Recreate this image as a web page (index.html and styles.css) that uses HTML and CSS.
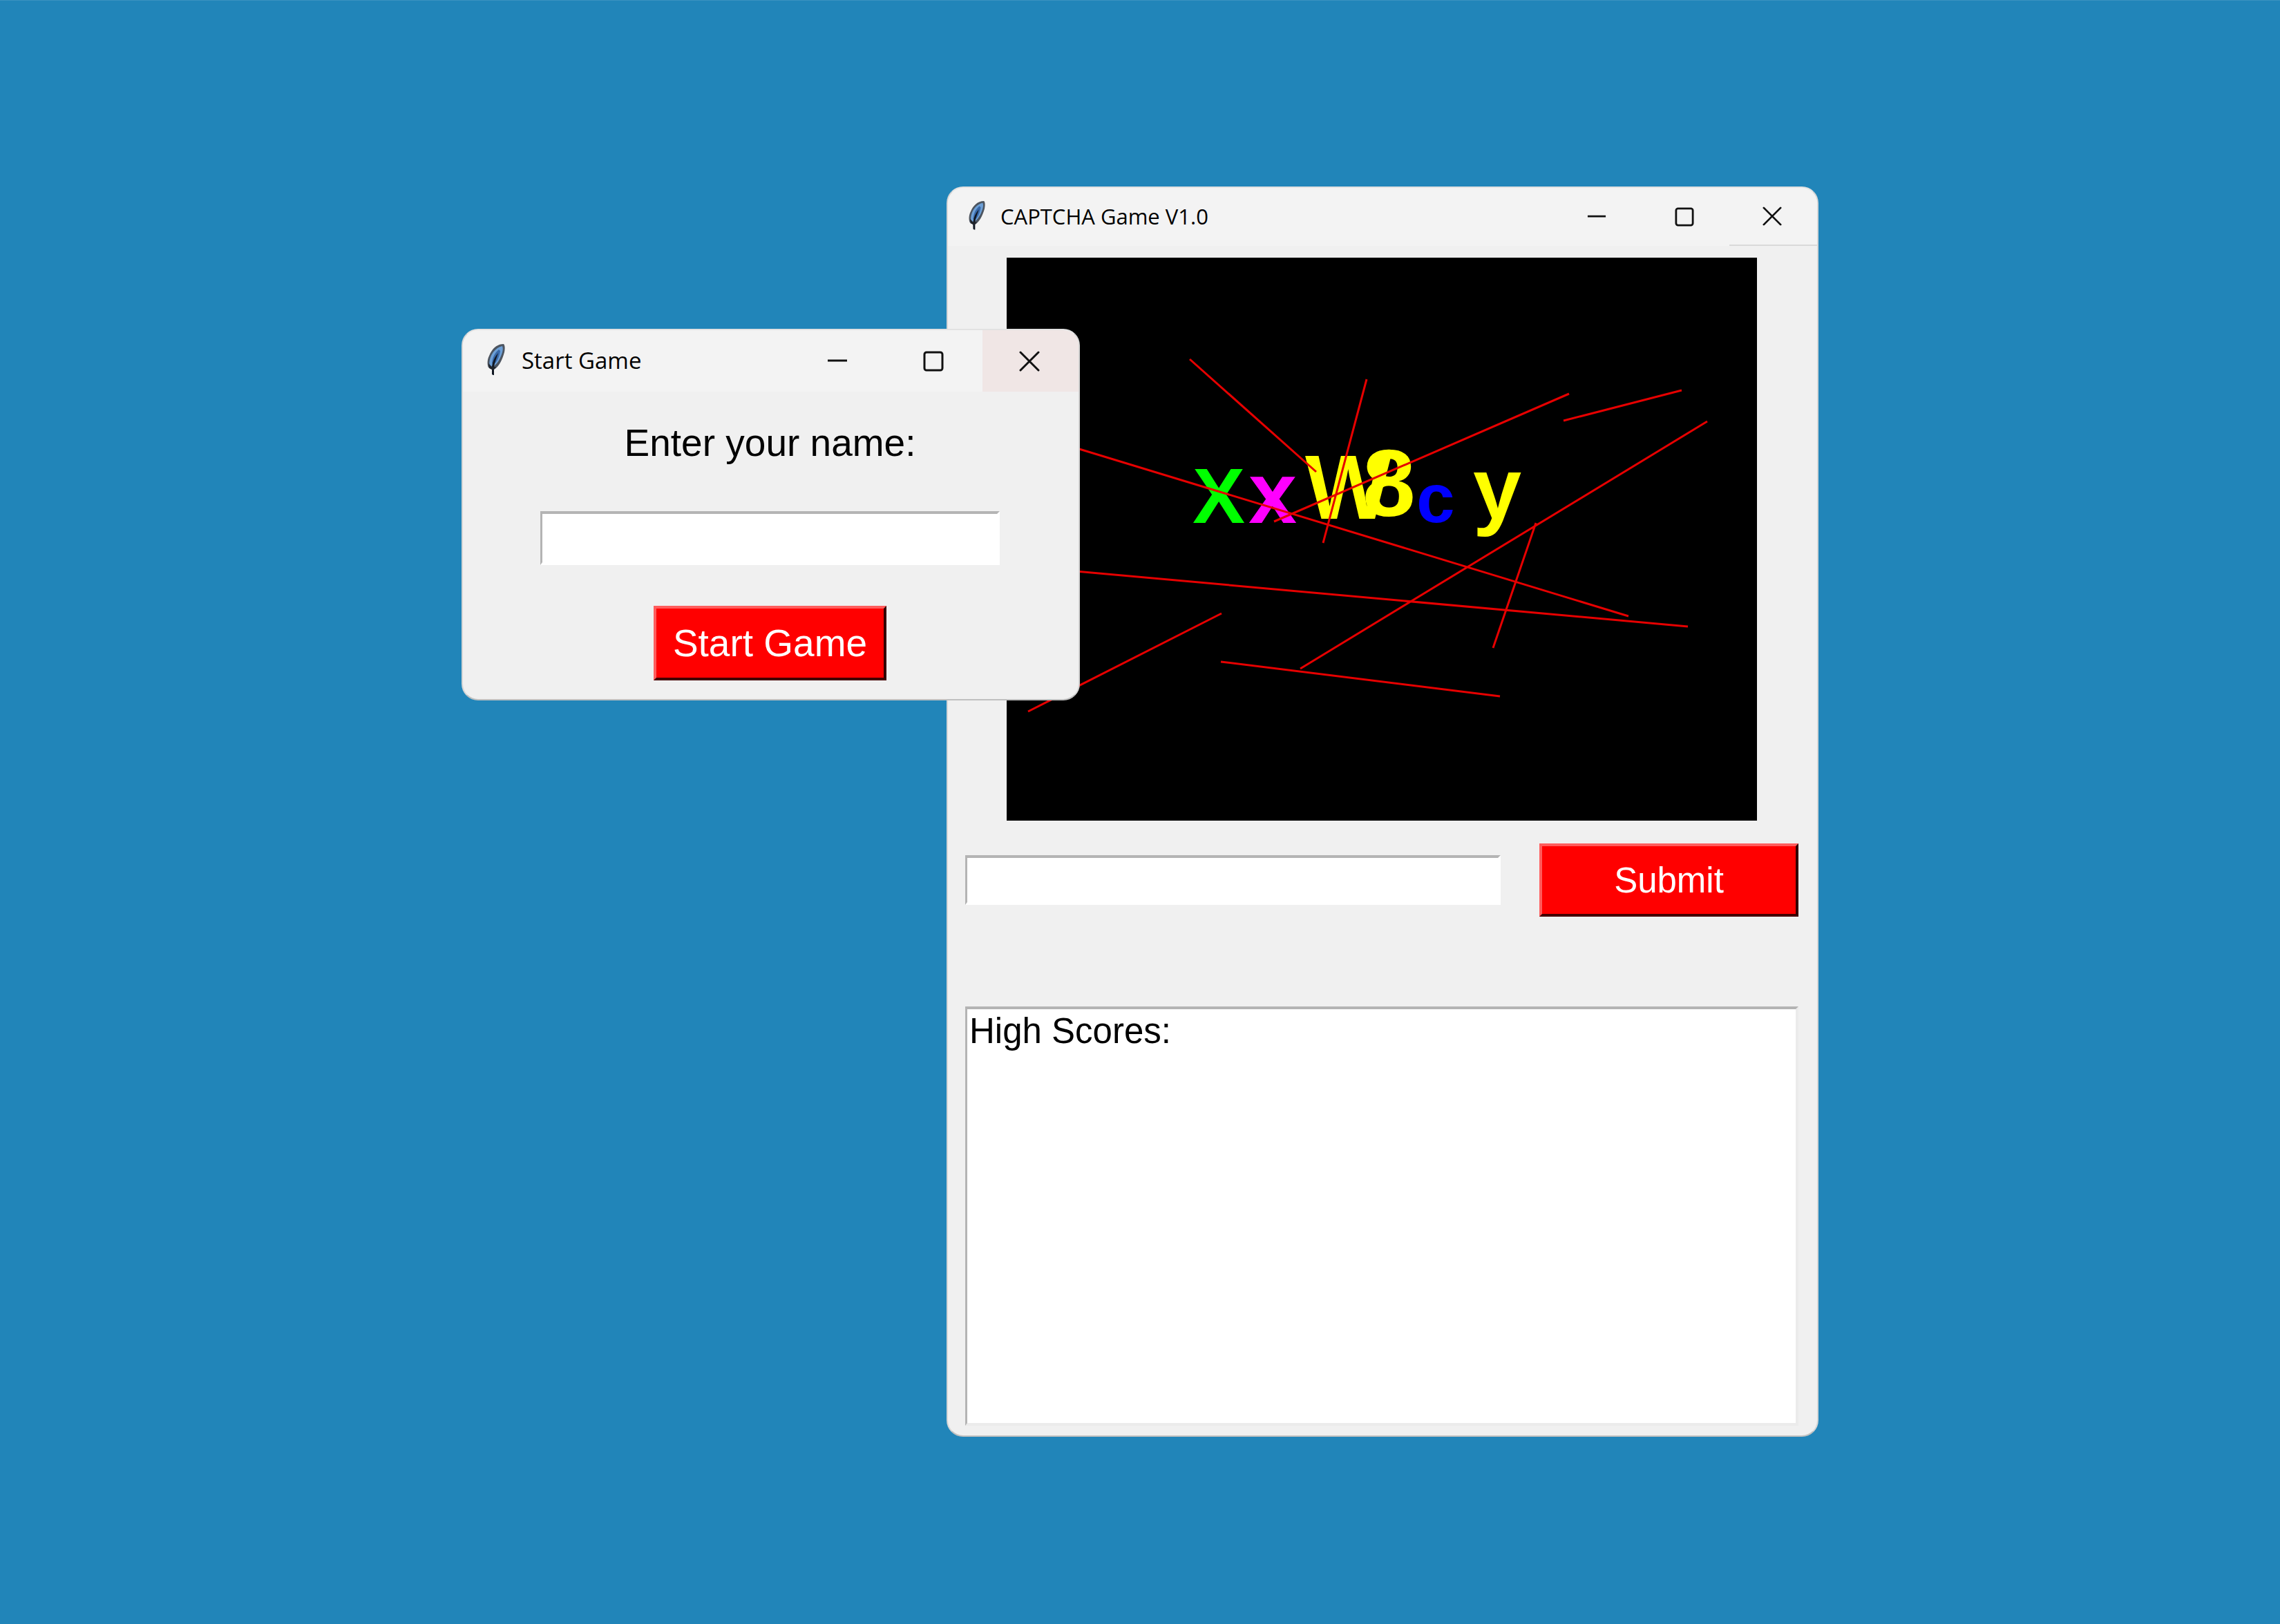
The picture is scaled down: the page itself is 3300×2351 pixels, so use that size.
FILE: index.html
```html
<!DOCTYPE html>
<html lang="en">
<head>
<meta charset="utf-8">
<title>CAPTCHA Game V1.0</title>
<link rel="stylesheet" href="styles.css">
</head>
<body>
<svg class="defs" aria-hidden="true">
  <symbol id="feather" viewBox="0 0 26 52">
    <path d="M24 1 C14 1 7 8 3 18 C0 24 0 31 2 35 L7 38 L8 46 L10 46 L10 38 C17 34 22 24 25 13 C26 8 26 3 24 1Z" fill="#4d5560"/>
    <path d="M22 4 C14 6 8 12 5 20 C3 26 3 30 4 33 L8 34 C14 31 19 23 22 13 C23 9 23 6 22 4Z" fill="#6c9fd6"/>
    <path d="M17 9 C11 14 8 20 7 29 L9 31 C14 28 18 19 19 11Z" fill="#3767a8"/>
    <path d="M16 14 C11 20 8 26 7 34 L7 45 L10 46 L10 34 C11 27 14 21 16 14Z" fill="#101722"/>
    <path d="M2 29 L7 34 L13 34 L9 39 L3 36Z" fill="#20252c"/>
  </symbol>
  <symbol id="minimize" viewBox="0 0 30 30"><path d="M1 14H29" stroke="#111" stroke-width="3"/></symbol>
  <symbol id="maximize" viewBox="0 0 30 30"><rect x="2" y="2" width="26" height="26" rx="3" fill="none" stroke="#111" stroke-width="3"/></symbol>
  <symbol id="close" viewBox="0 0 30 30"><path d="M2 2L28 28M28 2L2 28" stroke="#111" stroke-width="3" stroke-linecap="round"/></symbol>
</svg>
<main class="desktop">
  <section class="window game" aria-label="CAPTCHA Game">
    <header class="titlebar">
      <svg class="feather"><use href="#feather"/></svg>
      <h1 class="title">CAPTCHA Game V1.0</h1>
      <div class="controls">
        <button class="control" type="button" aria-label="Minimize"><svg><use href="#minimize"/></svg></button>
        <button class="control" type="button" aria-label="Maximize"><svg><use href="#maximize"/></svg></button>
        <button class="control close" type="button" aria-label="Close"><svg><use href="#close"/></svg></button>
      </div>
    </header>
    <form class="game-body">
      <svg class="captcha" viewBox="0 0 1086 815" role="img" aria-label="Captcha">
        <g class="glyphs">
          <text x="269" y="384" font-size="114" fill="#00ff00">X</text>
          <text x="350" y="384" font-size="126" fill="#ff00ff">x</text>
          <text x="432" y="378" font-size="132" fill="#ffff00">W</text>
          <text x="515" y="374" font-size="138" fill="#ffff00">8</text>
          <text x="593" y="383" font-size="100" fill="#0000ff">c</text>
          <text x="675" y="378" font-size="126" fill="#ffff00">y</text>
        </g>
        <path class="noise" d="M265 147L448 310M521 176L458 413M23 252L900 519M23 447L986 534M31 657L311 515M310 585L714 635M425 595L1014 237M387 382L814 197M806 236L977 192M766 384L704 565"/>
      </svg>
      <div class="answer">
        <input class="entry" type="text" aria-label="Captcha answer">
        <button class="action submit" type="button">Submit</button>
      </div>
      <textarea class="scores" aria-label="High scores" readonly>High Scores:</textarea>
    </form>
  </section>

  <section class="window start" aria-label="Start Game">
    <header class="titlebar">
      <svg class="feather"><use href="#feather"/></svg>
      <h2 class="title">Start Game</h2>
      <div class="controls">
        <button class="control" type="button" aria-label="Minimize"><svg><use href="#minimize"/></svg></button>
        <button class="control" type="button" aria-label="Maximize"><svg><use href="#maximize"/></svg></button>
        <button class="control close" type="button" aria-label="Close"><svg><use href="#close"/></svg></button>
      </div>
    </header>
    <form class="start-body">
      <label class="prompt" for="player">Enter your name:</label>
      <input class="entry" id="player" type="text">
      <button class="action" type="button">Start Game</button>
    </form>
  </section>
</main>
</body>
</html>
```
FILE: styles.css
```css
* { box-sizing: border-box; }

body {
  margin: 0;
  background: #2185b9;
  font-family: "Liberation Sans", Arial, sans-serif;
  color: #000;
}

.defs { display: none; }

.desktop {
  position: relative;
  min-height: 100vh;
  border-top: 1px solid #3a92c0;
}

.window {
  position: absolute;
  max-width: 100%;
  overflow: hidden;
  background: #f0f0f0;
  border: 2px solid #d6d6d6;
  border-top-color: #e2e2e2;
  border-bottom-color: #c0c0c0;
  border-radius: 24px;
}

.game { left: 1370px; top: 269px; width: 1262px; }
.start { left: 668px; top: 475px; width: 895px; }

.titlebar {
  display: flex;
  align-items: center;
  background: #f3f3f3;
}

.title {
  flex: 1;
  margin: 0;
  padding-bottom: 2px;
  font-family: "Open Sans", "Noto Sans", sans-serif;
  font-weight: 400;
  white-space: nowrap;
}

.controls { display: flex; align-self: stretch; }

.control {
  display: grid;
  place-items: center;
  padding: 0 4px 0 0;
  border: 0;
  background: transparent;
}

.game .titlebar { height: 84px; padding-left: 30px; gap: 22px; }
.game .title { font-size: 31px; line-height: 40px; }
.game .feather { width: 24px; height: 48px; }
.game .control { width: 127px; }
.game .control svg { width: 28px; height: 28px; }
.game .close { border-bottom: 2px solid #d9d9d9; }

.start .titlebar { height: 89px; padding-left: 35px; gap: 24px; }
.start .title { font-size: 33px; line-height: 44px; }
.start .feather { width: 26px; height: 52px; }
.start .control { width: 139px; }
.start .control svg { width: 30px; height: 30px; }
.start .close { background: #f0e6e5; }

.entry, .scores {
  background: #fff;
  border: 4px solid #fff;
  border-top-color: #b4b4b4;
  border-left: 3px solid #b4b4b4;
  border-radius: 0;
  font-family: inherit;
  outline: 0;
}

.action {
  border: 4px solid #000;
  border-top-color: #ff5c5c;
  border-left-color: #ff5c5c;
  border-right-color: #300;
  border-bottom-color: #400;
  border-radius: 0;
  background: #f00;
  color: #fff;
  font-family: inherit;
}

.game-body {
  display: flex;
  flex-direction: column;
  padding: 17px 27px 14px 25px;
}

.captcha {
  display: block;
  margin: 0 60px 33px;
  background: #000;
}

.glyphs { font-weight: 700; }

.noise { fill: none; stroke: #e60000; stroke-width: 3; }

.answer {
  display: flex;
  align-items: center;
  gap: 56px;
  margin-bottom: 130px;
}

.answer .entry { flex: 1; min-width: 0; height: 72px; font-size: 51px; }

.submit { width: 375px; height: 106px; font-size: 51px; }

.scores {
  height: 607px;
  padding: 2px 3px;
  border-right-color: #ebebeb;
  border-bottom-color: #ebebeb;
  font-size: 51px;
  line-height: 60px;
  resize: none;
}

.start-body {
  display: flex;
  flex-direction: column;
  align-items: center;
  padding: 42px 2px 27px 0;
  font-size: 55px;
}

.prompt { margin-bottom: 67px; line-height: 64px; }
.start-body .entry { width: 665px; height: 78px; margin-bottom: 59px; font-size: 55px; }
.start-body .action { width: 337px; height: 108px; padding: 0; font-size: 55px; }
```
